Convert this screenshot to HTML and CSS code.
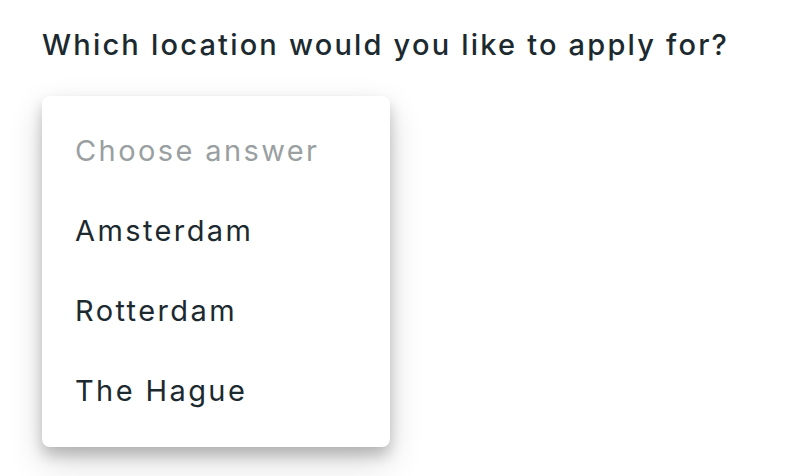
FILE: index.html
```html
<!DOCTYPE html>
<html lang="en">
<head>
    <meta charset="UTF-8" />
    <title>Location question</title>
    <link rel="stylesheet" href="styles.css">
</head>
<body>
<div class="question">
    <h1>Which location would you like to apply for?</h1>
    <ul class="dropdown" role="listbox">
        <li class="option placeholder">Choose answer</li>
        <li class="option">Amsterdam</li>
        <li class="option">Rotterdam</li>
        <li class="option">The Hague</li>
    </ul>
</div>
</body>
</html>
```

FILE: styles.css
```css
body {
    margin: 0;
    background: #fff;
    font-family: 'Inter', 'Noto Sans', sans-serif;
    color: #1c2a30;
}
.question {
    padding: 25px 42px 29px;
}
h1 {
    margin: 0;
    font-size: 29px;
    font-weight: 500;
    line-height: 40px;
    letter-spacing: 2.2px;
}
.dropdown {
    list-style: none;
    margin: 31px 0 0;
    padding: 15px 0 16px;
    width: 348px;
    background: #fff;
    border-radius: 8px;
    box-shadow: 0 8px 14px rgba(0,0,0,0.2), 0 14px 34px rgba(0,0,0,0.16);
}
.option {
    height: 80px;
    line-height: 80px;
    padding-left: 33px;
    font-size: 29px;
    letter-spacing: 2.4px;
}
.placeholder {
    color: #9a9fa2;
}
```
